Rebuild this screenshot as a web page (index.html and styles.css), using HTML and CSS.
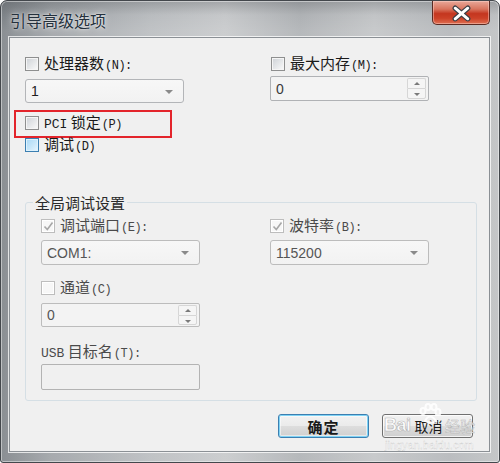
FILE: index.html
```html
<!DOCTYPE html>
<html lang="zh-CN">
<head>
<meta charset="utf-8">
<title>引导高级选项</title>
<link rel="stylesheet" href="styles.css">
</head>
<body>
<div class="window">
  <div class="titlebar">
    <span class="title">引导高级选项</span>
    <div class="close">
      <svg width="58" height="24" viewBox="0 0 58 24">
        <path d="M23 7 L36 18 M36 7 L23 18" stroke="#3a3f46" stroke-width="5.5" stroke-linecap="round"/>
        <path d="M23 7 L36 18 M36 7 L23 18" stroke="#ffffff" stroke-width="3" stroke-linecap="round"/>
      </svg>
    </div>
  </div>
  <div class="client">
    <div class="top">
      <div class="col">
        <div class="chk-row"><span class="cb"></span><span>处理器数<span class="acc">(N):</span></span></div>
        <div class="combo">1<span class="arrow"></span></div>
        <div class="mark">
          <div class="chk-row"><span class="cb"></span><span><span class="lat">PCI</span> 锁定<span class="acc">(P)</span></span></div>
        </div>
        <div class="chk-row tight"><span class="cb hover"></span><span>调试<span class="acc">(D)</span></span></div>
      </div>
      <div class="col">
        <div class="chk-row shift"><span class="cb"></span><span>最大内存<span class="acc">(M):</span></span></div>
        <div class="spin"><span class="val">0</span><span class="spin-btns"><span class="up"></span><span class="down"></span></span></div>
      </div>
    </div>

    <div class="group">
      <div class="legend">全局调试设置</div>
      <div class="group-grid">
        <div class="col">
          <div class="chk-row dis"><span class="cb dis checked"><svg width="11" height="11" viewBox="0 0 11 11"><path d="M1.5 5.5 L4.3 8.5 L9.5 1.5" fill="none" stroke="#a7a7a7" stroke-width="1.6"/></svg></span><span>调试端口<span class="acc">(E):</span></span></div>
          <div class="combo dis">COM1:<span class="arrow"></span></div>
          <div class="chk-row dis gap15"><span class="cb dis"></span><span>通道<span class="acc">(C)</span></span></div>
          <div class="spin dis small"><span class="val">0</span><span class="spin-btns"><span class="up"></span><span class="down"></span></span></div>
          <div class="label dis"><span class="lat">USB</span> 目标名<span class="acc">(T):</span></div>
          <div class="textbox"></div>
        </div>
        <div class="col">
          <div class="chk-row dis"><span class="cb dis checked"><svg width="11" height="11" viewBox="0 0 11 11"><path d="M1.5 5.5 L4.3 8.5 L9.5 1.5" fill="none" stroke="#a7a7a7" stroke-width="1.6"/></svg></span><span>波特率<span class="acc">(B):</span></span></div>
          <div class="combo dis">115200<span class="arrow"></span></div>
        </div>
      </div>
    </div>

    <div class="buttons">
      <div class="btn default">确定</div>
      <div class="btn cancel">取消</div>
    </div>
  </div>
  <div class="watermark">
    <span class="wm-logo">Bai</span>
    <svg class="wm-paw" width="24" height="22" viewBox="0 0 24 22">
      <g fill="none" stroke="#ffffff" stroke-width="2" opacity="0.9">
        <ellipse cx="5" cy="8" rx="2.5" ry="3"/>
        <ellipse cx="10" cy="4" rx="2.5" ry="3"/>
        <ellipse cx="16" cy="4" rx="2.5" ry="3"/>
        <ellipse cx="20" cy="9" rx="2.5" ry="3"/>
        <path d="M7 18 Q12 9 18 18 Q12 21 7 18 Z"/>
      </g>
    </svg>
    <span class="wm-cn">经验</span>
    <span class="wm-url">jingyan.baidu.com</span>
  </div>
</div>
</body>
</html>
```
FILE: styles.css
```css
* { box-sizing: border-box; }

html, body {
  margin: 0;
  padding: 0;
  width: 500px;
  height: 463px;
  overflow: hidden;
  background: #ffffff;
}

body {
  font-family: "Noto Sans CJK SC", "Liberation Sans", sans-serif;
  color: #1e1e1e;
}

.window {
  position: relative;
  width: 500px;
  height: 463px;
  border: 1px solid #43474c;
  border-radius: 7px 7px 3px 3px;
  padding: 0 9px 10px 8px;
  display: flex;
  flex-direction: column;
  background:
    linear-gradient(to bottom, rgba(60,64,68,0.25) 0, rgba(255,255,255,0) 14px, rgba(255,255,255,0.1) 30px),
    linear-gradient(to right, #7d8287 0%, #9da1a5 10%, #b9bcbf 30%, #c6c8ca 45%, #aeb1b4 60%, #c2c4c6 75%, #b3b6b9 90%, #bec0c2 100%);
  box-shadow: inset 0 0 0 1px rgba(255,255,255,0.45);
}

.titlebar {
  height: 36px;
  flex: none;
  display: flex;
  justify-content: space-between;
  align-items: flex-start;
}

.title {
  margin: 9px 0 0 1px;
  font-size: 16px;
  line-height: 20px;
  color: #25313d;
  letter-spacing: 0;
  text-shadow: 0 0 6px rgba(255,255,255,0.9), 0 0 2px rgba(255,255,255,0.7);
}

.close {
  width: 58px;
  height: 24px;
  border: 1px solid #5b2a22;
  border-top: none;
  border-radius: 0 0 5px 5px;
  background: linear-gradient(to bottom, #e9a899 0%, #d9755f 35%, #c4361f 55%, #cc4127 75%, #de6f52 100%);
  box-shadow: inset 0 0 0 1px rgba(255,220,210,0.45);
  display: flex;
}

.client {
  height: 415px;
  flex: none;
  background: #f0f0f0;
  border: 1px solid #8b9095;
  box-shadow: 0 0 0 1px rgba(255,255,255,0.75);
  padding: 18px 16px 0 15px;
}

.top {
  display: grid;
  grid-template-columns: 245px 1fr;
}

.col {
  display: flex;
  flex-direction: column;
  align-items: flex-start;
}

.chk-row {
  display: flex;
  align-items: center;
  gap: 5px;
  height: 16px;
  font-size: 15px;
  line-height: 16px;
  color: #1a1a1a;
  white-space: nowrap;
}

.chk-row.shift { margin-left: 1px; }
.chk-row.tight { margin-top: -1px; }
.chk-row.gap15 { margin-top: 15px; }

.acc {
  font-family: "Liberation Mono", monospace;
  font-size: 12px;
  letter-spacing: -0.5px;
  margin-left: 1px;
}

.lat {
  font-family: "Liberation Mono", monospace;
  font-size: 13px;
  letter-spacing: 0;
}

.cb {
  width: 14px;
  height: 14px;
  flex: none;
  border: 1px solid #8e8f8f;
  background: linear-gradient(135deg, #cdd1d6 0%, #e6e8ea 55%, #fbfbfb 100%);
  box-shadow: inset 0 0 0 1px #f5f5f5;
  display: flex;
  align-items: center;
  justify-content: center;
}

.cb.hover {
  border-color: #3c7fb1;
  background: linear-gradient(135deg, #a9d8f5 0%, #c8e7fa 55%, #e9f6fe 100%);
  box-shadow: inset 0 0 0 1px #def2fd;
}

.cb.dis {
  border-color: #bdbdbd;
  background: #f7f7f7;
  box-shadow: inset 0 0 0 1px #ffffff;
}

.dis { color: #4a4a4a; }

.combo {
  position: relative;
  width: 159px;
  height: 24px;
  margin-top: 7px;
  border: 1px solid #b3b5b8;
  border-radius: 3px;
  background: linear-gradient(to bottom, #f7f7f7, #f2f2f2);
  display: flex;
  align-items: center;
  padding-left: 5px;
  font-family: "Liberation Sans", sans-serif;
  font-size: 14px;
  color: #1e1e1e;
}

.combo.dis {
  height: 25px;
  margin-top: 6px;
  border-color: #bcbcbc;
  color: #555555;
}

.arrow {
  position: absolute;
  right: 10px;
  top: 10px;
  width: 0;
  height: 0;
  border-left: 4px solid transparent;
  border-right: 4px solid transparent;
  border-top: 4px solid #8a8a8a;
}

.mark {
  margin-top: 7px;
  margin-left: -11px;
  width: 158px;
  height: 28px;
  border: 2px solid #e3242b;
  padding: 3px 0 0 9px;
}

.spin {
  width: 159px;
  height: 25px;
  margin-top: 4px;
  border: 1px solid #b0b2b5;
  border-radius: 2px;
  background: #f3f3f3;
  display: flex;
  justify-content: space-between;
  align-items: stretch;
  padding: 1px 2px 1px 5px;
  font-family: "Liberation Sans", sans-serif;
  font-size: 14px;
  color: #3a3a3a;
}

.spin.small {
  height: 24px;
  margin-top: 7px;
  border-color: #bcbcbc;
  color: #555555;
}

.spin .val {
  align-self: center;
}

.spin-btns {
  width: 19px;
  display: flex;
  flex-direction: column;
}

.spin-btns span {
  flex: 1;
  position: relative;
  border: 1px solid #d6d6d6;
  background: #f5f5f5;
}

.spin-btns .up { border-bottom: none; border-radius: 2px 2px 0 0; }
.spin-btns .down { border-radius: 0 0 2px 2px; }

.spin-btns span::after {
  content: "";
  position: absolute;
  left: 6px;
  top: 3px;
  width: 0;
  height: 0;
  border-left: 3px solid transparent;
  border-right: 3px solid transparent;
}

.spin-btns .up::after { border-bottom: 3px solid #7a7a7a; }
.spin-btns .down::after { border-top: 3px solid #7a7a7a; top: 4px; }

.group {
  margin-top: 49px;
  width: 452px;
  border: 1px solid #d5dfe5;
  border-radius: 3px;
  padding: 0 0 10px 15px;
}

.legend {
  width: fit-content;
  height: 17px;
  margin: -9px 0 0 -8px;
  padding: 0 2px;
  background: #f0f0f0;
  font-size: 15px;
  line-height: 17px;
  color: #2a2a2a;
}

.group-grid {
  margin-top: 7px;
  display: grid;
  grid-template-columns: 229px 159px;
}

.label {
  margin-top: 16px;
  height: 16px;
  font-size: 15px;
  line-height: 16px;
  white-space: nowrap;
}

.textbox {
  margin-top: 5px;
  width: 159px;
  height: 26px;
  border: 1px solid #b3b3b3;
  border-radius: 2px;
  background: #f0f0f0;
}

.buttons {
  margin-top: 13px;
  display: flex;
  justify-content: flex-end;
  gap: 13px;
}

.btn {
  width: 91px;
  height: 24px;
  border: 1px solid #707070;
  border-radius: 3px;
  background: linear-gradient(to bottom, #f2f2f2 0%, #ebebeb 48%, #dddddd 52%, #cfcfcf 100%);
  box-shadow: inset 0 0 0 1px rgba(255,255,255,0.75);
  display: flex;
  align-items: center;
  justify-content: center;
  font-size: 15px;
  color: #1a1a1a;
  letter-spacing: 1px;
}

.btn.cancel {
  font-size: 14px;
  letter-spacing: 0;
  padding-left: 2px;
}

.btn.default {
  border-color: #3c7fb1;
  box-shadow: inset 0 0 0 1px #7fd3f5, inset 0 0 0 2px rgba(255,255,255,0.5);
  font-weight: bold;
}

.watermark {
  position: absolute;
  left: 383px;
  top: 400px;
  width: 95px;
  height: 55px;
  pointer-events: none;
}

.wm-logo {
  position: absolute;
  left: 0;
  top: 13px;
  font-family: "Liberation Sans", sans-serif;
  font-weight: bold;
  font-size: 18px;
  line-height: 22px;
  letter-spacing: -0.5px;
  color: rgba(255,255,255,0.9);
  -webkit-text-stroke: 0.6px rgba(140,140,140,0.6);
}

.wm-paw {
  position: absolute;
  left: 34px;
  top: 2px;
}

.wm-cn {
  position: absolute;
  left: 61px;
  top: 15px;
  font-size: 15px;
  line-height: 20px;
  color: rgba(255,255,255,0.9);
  -webkit-text-stroke: 0.5px rgba(140,140,140,0.6);
}

.wm-url {
  position: absolute;
  left: 1px;
  top: 38px;
  font-family: "Liberation Sans", sans-serif;
  font-size: 11px;
  line-height: 13px;
  color: rgba(255,255,255,0.95);
  -webkit-text-stroke: 0.3px rgba(150,150,150,0.5);
}
```
